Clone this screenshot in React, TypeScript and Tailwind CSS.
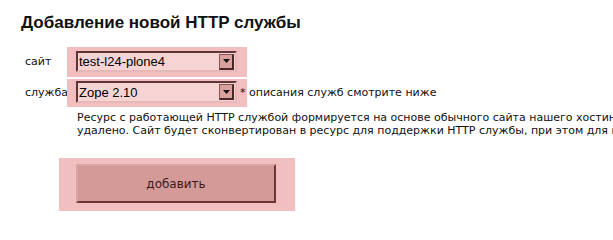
import React from 'react';

const font = { fontFamily: '"DejaVu Sans", Verdana, sans-serif' };
const arial = { fontFamily: '"Liberation Sans", Arial, sans-serif' };

const FakeSelect: React.FC<{ value: string; h: string }> = ({ value, h }) => (
  <div className={`flex items-center w-[161px] ${h} bg-[#f6d4d4] border-2 border-t-[#5e3434] border-l-[#5e3434] border-b-[#e8b8b8] border-r-[#e8b8b8]`}>
    <span className="flex-1 pl-[1px] text-[13px] leading-none text-black truncate" style={arial}>{value}</span>
    <span className="flex items-center justify-center w-[15px] h-[16px] mr-[1px] bg-[#d9a19e] border border-t-[#8a5555] border-l-[#8a5555] border-b-2 border-r-2 border-b-[#4a2626] border-r-[#4a2626]">
      <svg width="7" height="4" viewBox="0 0 7 4"><path d="M0 0h7L3.5 4z" fill="#111" /></svg>
    </span>
  </div>
);

export default function App() {
  return (
    <div className="bg-white w-[613px] h-[219px] overflow-hidden text-[#111]" style={font}>
      <h1 className="pl-[21px] pt-[13px] text-[17px] font-bold leading-[20px] whitespace-nowrap" style={arial}>
        Добавление новой HTTP службы
      </h1>
      <div className="pl-[25px] pt-[14px] text-[11px]">
        <div className="flex items-stretch">
          <div className="w-[42px] flex items-center">сайт</div>
          <div className="w-[180px] h-[30px] bg-[#f2bfc1] pl-[9px] pt-[4px]">
            <FakeSelect value="test-l24-plone4" h="h-[21px]" />
          </div>
        </div>
        <div className="flex items-stretch mt-[2px]">
          <div className="w-[42px] flex items-center whitespace-nowrap">служба</div>
          <div className="w-[180px] h-[28px] bg-[#f2bfc1] pl-[9px] pt-[2px]">
            <FakeSelect value="Zope 2.10" h="h-[22px]" />
          </div>
          <div className="flex items-center -ml-[7px] whitespace-nowrap">* описания служб смотрите ниже</div>
        </div>
        <p className="pl-[52px] pt-[4px] text-[11px] leading-[13px] whitespace-nowrap">
          Ресурс с работающей HTTP службой формируется на основе обычного сайта нашего хостинга
          <br />
          удалено. Сайт будет сконвертирован в ресурс для поддержки HTTP службы, при этом для него
        </p>
        <div className="ml-[34px] mt-[21px] w-[236px] h-[53px] bg-[#f2bfc1] pl-[17px] pt-[6px]">
          <button className="w-[200px] h-[39px] bg-[#d49a97] border-2 border-t-[#d9a5a2] border-l-[#d9a5a2] border-b-[#6e3535] border-r-[#6e3535] text-[12px] text-[#3a1a1a]" style={font}>
            добавить
          </button>
        </div>
      </div>
    </div>
  );
}
